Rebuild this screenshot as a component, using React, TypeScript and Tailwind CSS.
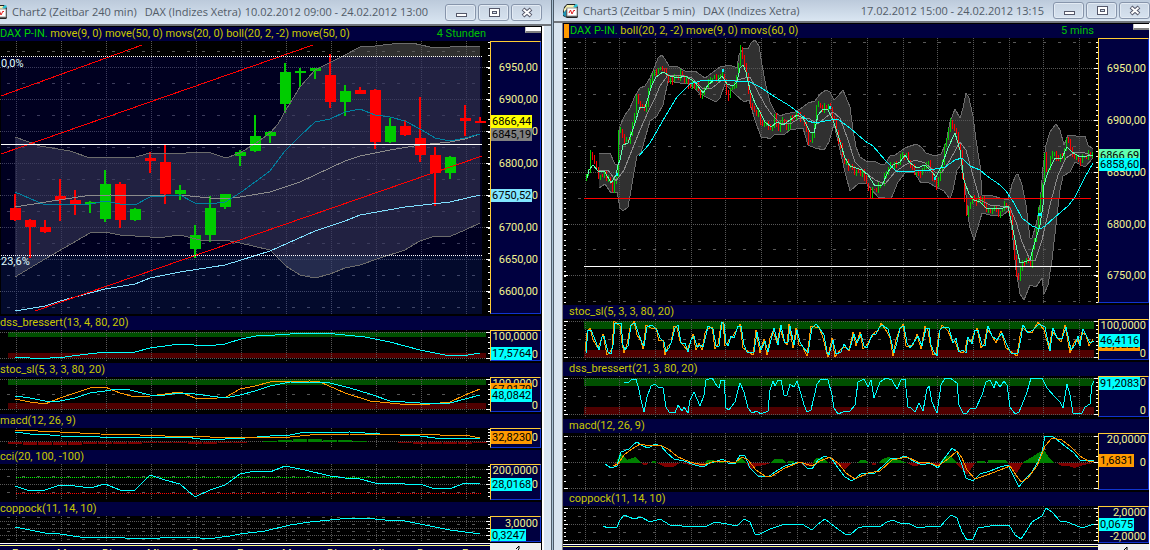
import type { ReactNode } from "react";

type Label = { y: number; text: string };
type Tag = { y: number; text: string; color: string };

const LEFT_COLS = [16, 61, 106, 151, 196, 241, 286, 331, 376, 421, 466];
const RIGHT_COLS = [585, 619, 655, 691, 725, 761, 797, 831, 867, 903, 937, 973, 1009, 1043, 1079];

// [center x, body top, body bottom, high, low, rising]
const CANDLES: [number, number, number, number, number, boolean][] = [
  [15, 208, 220, 194, 221, false],
  [30, 220, 227, 219, 258, false],
  [45, 227, 232, 220, 233, false],
  [60, 196, 200, 179, 221, false],
  [75, 200, 204, 190, 215, false],
  [90, 202, 204, 201, 213, true],
  [105, 184, 219, 170, 222, true],
  [120, 184, 220, 182, 228, false],
  [135, 209, 220, 208, 221, true],
  [150, 158, 161, 152, 173, false],
  [165, 162, 194, 145, 204, false],
  [180, 190, 194, 185, 200, true],
  [195, 235, 249, 225, 258, true],
  [210, 208, 235, 196, 242, true],
  [225, 194, 207, 194, 209, true],
  [240, 152, 156, 150, 166, true],
  [255, 136, 151, 115, 152, true],
  [270, 132, 136, 131, 143, true],
  [285, 72, 104, 63, 113, true],
  [300, 71, 73, 68, 87, true],
  [315, 68, 71, 68, 79, true],
  [330, 75, 102, 54, 108, false],
  [345, 91, 102, 85, 116, true],
  [360, 90, 94, 87, 94, false],
  [375, 90, 142, 89, 149, false],
  [390, 126, 142, 118, 143, true],
  [405, 126, 135, 120, 136, false],
  [420, 138, 155, 97, 162, false],
  [435, 155, 173, 147, 206, false],
  [450, 157, 173, 156, 179, true],
  [465, 118, 121, 105, 136, false],
  [480, 121, 123, 117, 123, false],
];

const UPPER_240 =
  "15,137 40,146 52,148 70,151 90,158 136,157 150,153 175,154 197,152 211,153 226,158 240,153 256,143 270,133 278,124 287,108 300,87 315,70 335,60 345,55 360,47 375,46 400,43 412,43 430,47 450,47 465,46 480,46";
const LOWER_240 =
  "480,223 465,230 451,236 435,236 420,241 405,250 380,258 360,265 345,268 330,274 315,278 300,275 286,266 270,250 240,243 225,240 210,241 200,240 180,235 165,237 150,237 120,235 105,232 90,233 45,259 15,277";

const UPPER_5 =
  "599,154 610,153 615,164 618,165 620,126 625,115 630,108 635,96 640,88 645,86 650,78 655,66 658,58 662,55 665,59 669,66 678,67 685,71 695,71 705,78 712,73 720,67 730,65 737,68 739,55 743,48 748,49 751,43 755,40 759,46 762,65 766,86 770,102 775,112 780,116 785,114 795,112 803,107 808,103 815,101 820,94 826,90 830,92 834,100 838,96 843,90 850,107 853,130 856,147 860,157 866,161 874,161 880,164 885,164 890,156 895,155 905,148 910,146 917,144 922,148 926,153 935,156 941,154 946,143 950,122 955,109 960,118 963,108 966,93 969,98 973,116 976,140 980,165 982,195 993,196 1000,198 1008,200 1010,193 1012,184 1016,175 1018,174 1022,185 1026,205 1030,238 1032,238 1036,225 1040,205 1043,167 1046,145 1050,132 1056,124 1060,130 1064,145 1068,135 1076,136 1085,136 1088,145 1093,149";
const LOWER_5 =
  "1093,158 1085,167 1075,162 1070,172 1063,176 1060,190 1056,225 1052,260 1048,285 1044,294 1042,278 1036,287 1030,285 1024,300 1020,294 1016,270 1012,230 1009,210 1003,215 990,215 982,213 980,220 974,240 970,228 968,215 965,185 961,165 957,170 953,190 950,199 944,191 938,188 927,182 921,183 914,172 905,173 898,182 891,199 878,197 872,190 866,183 858,184 850,191 845,172 840,150 834,124 829,142 824,150 815,148 808,145 803,128 790,130 785,134 775,134 770,139 765,137 761,137 755,120 751,107 749,100 744,102 735,94 725,84 720,98 716,102 712,100 700,94 690,84 680,83 668,81 663,105 657,116 650,121 646,135 641,153 637,156 634,172 631,190 628,207 623,211 620,208 617,192 611,193 605,184 599,188";
const PRICE_5 =
  "585,180 589,168 590,150 593,162 597,165 598,178 603,172 609,182 612,188 617,174 618,129 621,132 625,140 629,140 632,125 636,98 640,103 643,112 646,100 650,80 654,72 658,70 662,66 667,78 673,80 680,73 688,84 695,85 701,96 706,85 712,75 717,80 722,72 727,97 731,88 736,76 740,50 745,67 749,100 753,110 758,112 762,128 766,120 769,132 774,117 778,127 782,118 786,130 790,118 798,113 803,118 808,142 812,137 816,104 822,106 830,108 836,130 842,155 848,166 856,172 862,172 866,180 869,195 874,190 882,182 888,165 895,166 903,152 910,162 915,175 921,172 927,160 932,176 937,187 941,165 949,121 955,128 960,155 963,190 966,215 970,200 974,198 982,200 987,212 993,207 1000,212 1003,205 1009,208 1013,245 1017,285 1020,265 1024,262 1030,262 1034,240 1038,210 1042,180 1043,145 1045,165 1048,172 1051,150 1057,158 1062,155 1067,135 1070,150 1075,158 1080,160 1087,152 1093,157";
const FAST_5 =
  "587,178 589,170 593,165 598,171 605,172 611,183 616,175 618,165 620,160 623,145 628,143 634,126 640,107 645,107 648,98 652,85 656,77 663,72 670,76 678,78 685,76 695,82 703,93 708,85 714,80 718,80 722,76 727,84 733,86 737,82 740,68 743,65 746,72 750,90 755,103 760,112 765,122 771,127 777,122 783,125 790,120 797,115 803,118 810,132 814,133 818,115 823,109 828,110 833,120 838,135 845,158 850,166 856,168 862,170 868,175 875,186 882,185 888,172 893,165 900,162 905,155 910,163 917,168 925,165 932,172 936,177 942,165 948,148 955,133 960,150 964,180 969,194 974,200 980,202 987,209 993,208 1000,209 1008,206 1012,225 1016,245 1020,263 1024,262 1030,260 1034,245 1040,225 1043,205 1044,185 1048,172 1055,158 1062,158 1067,147 1072,152 1080,157 1087,156 1093,155";
const MID_5 =
  "599,171 608,170 616,181 624,170 632,150 640,130 648,112 655,98 660,86 668,75 680,75 692,78 703,89 712,88 722,80 733,81 745,78 750,77 757,90 765,105 772,115 780,123 790,124 800,118 808,118 818,124 825,118 833,112 840,118 848,140 855,162 865,172 875,180 885,184 895,172 905,165 915,160 925,163 935,172 942,172 950,160 960,142 966,150 972,172 980,200 990,205 1000,206 1010,208 1016,222 1022,242 1030,260 1035,261 1042,240 1050,205 1058,175 1066,158 1075,152 1085,153 1093,156";
const SLOW_5 =
  "639,156 650,143 662,122 677,97 690,84 700,81 715,80 735,81 750,82 760,87 775,97 790,106 800,114 808,121 815,123 825,121 838,119 850,128 865,141 873,146 885,160 897,172 915,171 930,170 945,167 955,160 962,158 970,166 980,170 987,176 1000,185 1006,191 1014,203 1022,218 1032,226 1040,229 1045,226 1055,217 1068,206 1075,197 1085,177 1093,163";
const STOC_5 =
  "586,353 588,330 591,330 594,337 599,350 602,337 604,336 608,352 611,354 613,345 615,323 621,323 623,345 625,350 628,346 631,325 635,323 638,332 642,343 644,346 647,327 652,325 657,330 660,338 664,342 666,352 669,348 672,340 675,328 678,325 681,343 685,343 688,352 691,340 694,336 697,347 700,345 703,347 706,335 708,326 713,329 716,346 719,346 722,322 724,324 726,343 728,346 731,336 734,338 738,326 741,326 744,345 747,352 754,352 757,332 761,350 765,341 768,352 771,340 774,328 778,345 781,325 785,343 788,342 790,326 794,345 797,330 800,342 803,347 808,353 812,328 816,324 820,329 824,335 827,352 829,355 833,340 836,354 841,352 844,344 848,350 850,348 854,334 857,343 861,334 864,346 867,348 872,335 876,334 879,328 882,325 888,329 891,340 894,353 897,342 900,328 904,326 907,343 910,348 914,342 918,336 922,346 926,328 929,328 931,345 934,352 937,356 940,330 943,327 949,328 953,343 956,338 959,352 963,350 966,353 968,337 972,344 975,330 978,330 982,345 985,346 988,326 992,336 997,340 1002,333 1007,345 1011,353 1018,353 1021,338 1023,325 1028,333 1033,330 1039,324 1045,327 1050,351 1053,328 1057,338 1062,339 1066,327 1071,350 1075,345 1078,336 1080,346 1083,329 1087,337 1090,343 1094,341";
const DSS_5 =
  "624,382 628,383 632,379 636,379 639,390 641,400 644,412 647,397 651,386 655,384 658,387 663,388 666,407 669,412 675,413 678,405 682,411 684,407 688,413 690,400 694,392 700,406 704,395 706,380 712,378 717,386 719,388 721,380 724,380 726,408 729,410 735,402 738,390 740,383 744,392 748,408 752,413 757,411 761,414 768,411 770,390 773,381 775,386 778,380 781,380 784,395 787,395 790,384 794,387 797,381 801,394 804,405 807,412 811,410 814,397 817,384 821,379 828,380 832,395 834,408 838,414 843,412 850,411 855,405 858,382 864,379 868,387 871,380 874,398 877,390 880,382 886,378 892,380 897,389 901,380 905,379 908,407 911,408 915,412 919,403 923,411 927,389 929,386 932,402 937,413 941,385 945,378 950,378 957,383 959,405 963,413 966,414 970,409 976,408 982,395 986,382 990,380 994,388 996,381 1000,387 1004,381 1007,385 1010,407 1015,414 1019,412 1024,400 1027,392 1031,378 1042,378 1047,388 1055,397 1060,402 1063,408 1067,384 1070,395 1073,413 1082,413 1085,407 1090,404 1092,385 1094,381";

function parse(points: string) {
  return points.split(" ").map((p) => p.split(",").map(Number));
}

// splits the price curve into short rising and falling bars
function priceBars(points: string) {
  const curve = parse(points);
  let up = "";
  let down = "";
  let seg = 0;
  let prev = curve[0][1];
  for (let x = 586, i = 0; x < 1093; x += 2, i++) {
    while (seg < curve.length - 2 && curve[seg + 1][0] < x) seg++;
    const [x0, y0] = curve[seg];
    const [x1, y1] = curve[seg + 1];
    const wobble = ((i * 37) % 11) - 5;
    const y = Math.round(y0 + ((y1 - y0) * (x - x0)) / (x1 - x0) + wobble * 0.6);
    const top = Math.min(prev, y) - (i % 3);
    const bottom = Math.max(prev, y) + ((i * 5) % 4);
    const bar = `M${x + 0.5} ${top}V${bottom + 1}`;
    if (y < prev || (y === prev && i % 2)) up += bar;
    else down += bar;
    prev = y;
  }
  return { up, down };
}

function signalLine(points: string) {
  return parse(points)
    .map(([x, y], i) => `${x - 1},${Math.min(357, Math.max(321, y + (i % 2 ? 3 : -2)))}`)
    .join(" ");
}

const BARS_5 = priceBars(PRICE_5);

function Line({ points, color }: { points: string; color: string }) {
  return <polyline points={points} fill="none" stroke={color} />;
}

type GridProps = {
  cols: number[];
  x1: number;
  x2: number;
  y1: number;
  y2: number;
  dotted?: number[];
  dashed?: number[];
  dashStart: number;
};

function Grid({ cols, x1, x2, y1, y2, dotted = [], dashed = [], dashStart }: GridProps) {
  return (
    <g stroke="#585858" fill="none">
      {cols.map((x) => (
        <path key={x} d={`M${x + 0.5} ${y1}V${y2}`} strokeDasharray="1 1" />
      ))}
      {dotted.map((y) => (
        <path key={y} d={`M${x1} ${y + 0.5}H${x2}`} strokeDasharray="1 1" />
      ))}
      {dashed.map((y) => (
        <path key={y} d={`M${dashStart} ${y + 0.5}H${x2}`} strokeDasharray="3 12" />
      ))}
    </g>
  );
}

function Ticks({ x, side, ys, major = [] }: { x: number; side: "left" | "right"; ys: number[]; major?: number[] }) {
  const dir = side === "right" ? -1 : 1;
  return (
    <g stroke="#ffffff">
      {ys.map((y) => (
        <path key={y} d={`M${x} ${y + 0.5}h${dir * 2}`} />
      ))}
      {major.map((y) => (
        <path key={`m${y}`} d={`M${x} ${y + 0.5}h${dir * 4}`} />
      ))}
    </g>
  );
}

function range(from: number, to: number, step: number) {
  const out: number[] = [];
  for (let y = from; y < to; y += step) out.push(Math.round(y));
  return out;
}

function Zones({ x1, x2, top, bottom, size }: { x1: number; x2: number; top: number; bottom: number; size: number }) {
  return (
    <>
      <rect x={x1} y={top} width={x2 - x1} height={size} fill="#005000" />
      <rect x={x1} y={bottom - size} width={x2 - x1} height={size} fill="#500000" />
    </>
  );
}

type PanelProps = {
  name: ReactNode;
  top: number;
  height: string;
  size: number;
  left: number;
  width: number;
  labels: Label[];
  tags: Tag[];
  notes?: Label[];
  children: ReactNode;
};

function Panel({ name, top, height, size, left, width, labels, tags, notes = [], children }: PanelProps) {
  return (
    <section className="mb-[2px]">
      <header className="flex h-[14px] items-center overflow-hidden whitespace-pre bg-[#000040] leading-[14px] text-[#c8c800]">
        {name}
      </header>
      <div className={`flex ${height}`}>
        <div className="relative h-full min-w-0 flex-1">
          <svg
            className="h-full w-full"
            viewBox={`${left} ${top} ${width} ${size}`}
            preserveAspectRatio="none"
            shapeRendering="crispEdges"
          >
            {children}
          </svg>
          {notes.map((n) => (
            <span
              key={n.text}
              className="absolute left-[1px] leading-[14px] text-[#e0ffff]"
              style={{ top: n.y - top - 7 }}
            >
              {n.text}
            </span>
          ))}
        </div>
        <div className="relative w-[51px] overflow-hidden border border-t-[#ffcc33] border-r-[#1034d0] border-b-[#1034d0] border-l-[#ffcc33] bg-[#000040]">
          {labels.map((l) => (
            <span
              key={l.text}
              className="absolute right-[2px] leading-[14px] text-[#f4f490]"
              style={{ top: l.y - top - 8 }}
            >
              {l.text}
            </span>
          ))}
          {tags.map((t) => (
            <span
              key={t.text}
              className="absolute left-0 h-[13px] px-[1px] leading-[13px] text-black"
              style={{ top: t.y - top - 1, backgroundColor: t.color }}
            >
              {t.text}
            </span>
          ))}
        </div>
      </div>
    </section>
  );
}

function WindowButton({ label, children }: { label: string; children: ReactNode }) {
  return (
    <button
      aria-label={label}
      className="flex h-[17px] w-[31px] items-center justify-center rounded-[3px] border border-[#8795ab] bg-linear-to-b from-[#c9d5e3] to-[#d6e2ef] shadow-[inset_0_0_0_1px_#e3ebf4]"
    >
      <svg width="12" height="11" viewBox="0 0 12 11" shapeRendering="crispEdges">
        {children}
      </svg>
    </button>
  );
}

function WindowButtons() {
  return (
    <div className="flex gap-[2px]">
      <WindowButton label="Minimieren">
        <rect x="1" y="6" width="11" height="4" rx="1" fill="#55586a" />
        <rect x="2" y="7" width="9" height="2" fill="#ffffff" />
      </WindowButton>
      <WindowButton label="Wiederherstellen">
        <rect x="1" y="1" width="11" height="9" fill="#55586a" />
        <rect x="2" y="2" width="9" height="7" fill="#ffffff" />
        <rect x="4" y="4" width="5" height="3" fill="#55586a" />
        <rect x="5" y="5" width="3" height="1" fill="#d6e2ef" />
      </WindowButton>
      <WindowButton label="Schließen">
        <path d="M2 2L10 9M10 2L2 9" stroke="#55586a" strokeWidth="4" shapeRendering="auto" />
        <path d="M2.500 2.500L9.500 8.500M9.500 2.500L2.500 8.500" stroke="#ffffff" strokeWidth="2" shapeRendering="auto" />
      </WindowButton>
    </div>
  );
}

function ChartIcon() {
  return (
    <svg width="16" height="16" viewBox="0 0 16 16" className="shrink-0">
      <path d="M1 4L4 1H12L15 4V14L14 15H4L0 13V9Z" fill="#222222" />
      <path d="M1 6L4 2H11L13 4L11 5H4L2 9H1Z" fill="#f6f0b0" />
      <path d="M10 4L13 1L15 2L13 5Z" fill="#28c4d8" />
      <path d="M0 10L3 7V14L0 12Z" fill="#1d8fb0" />
      <rect x="4" y="5" width="10" height="8" fill="#ffffff" stroke="#999999" />
      <path d="M6 10L7.500 7L9 11L11 7L12 8" stroke="#e02020" fill="none" />
    </svg>
  );
}

function TitleBar({ title, market, period, className }: { title: string; market: string; period: string; className: string }) {
  return (
    <div
      className={`flex items-center overflow-hidden whitespace-nowrap border-b-2 border-[#70757c] bg-linear-to-b from-[#bccadb] to-[#dae6f2] font-['Open_Sans',sans-serif] text-[11px] leading-[16px] text-[#525c68] ${className}`}
    >
      <ChartIcon />
      <h2 className="ml-[4px]">{title}</h2>
      <span className="ml-[8px]">{market}</span>
      <time className="ml-auto">{period}</time>
      <WindowButtons />
    </div>
  );
}

function MiniButton() {
  return (
    <button
      aria-label="Leiste"
      className="ml-auto h-[6px] w-[16px] self-start border-b-2 border-l border-b-[#808080] border-l-[#c0c0c0] bg-white"
    />
  );
}

function Chart240() {
  const base = { left: 0, width: 490 };
  const grid = { cols: LEFT_COLS, x1: 0, x2: 486, dashStart: 7 };
  return (
    <>
      <Panel
        {...base}
        name={
          <>
            <span className="text-[#00d000]">DAX P-IN.</span> move(9, 0) move(50, 0) movs(20, 0) boll(20, 2, -2) move(50, 0)
            <span className="ml-auto text-[#00c000]">4 Stunden</span>
            <span className="flex w-[55px] self-start">
              <MiniButton />
            </span>
          </>
        }
        top={41}
        height="h-[273px]"
        size={273}
        labels={[
          { y: 68, text: "6950,00" },
          { y: 100, text: "6900,00" },
          { y: 132, text: "6850,00" },
          { y: 164, text: "6800,00" },
          { y: 196, text: "6750,00" },
          { y: 228, text: "6700,00" },
          { y: 260, text: "6650,00" },
          { y: 292, text: "6600,00" },
        ]}
        tags={[
          { y: 115, text: "6866,44", color: "#ffff00" },
          { y: 128, text: "6845,19", color: "#808080" },
          { y: 189, text: "6750,52", color: "#80e6ff" },
        ]}
        notes={[
          { y: 64, text: "0,0%" },
          { y: 262, text: "23,6%" },
        ]}
      >
        <polygon points={`${UPPER_240} ${LOWER_240}`} fill="#303030" />
        <Grid {...grid} y1={41} y2={314} dotted={range(67, 314, 32)} dashed={range(51, 314, 32)} />
        <rect x={1} y={57} width={481} height={199} fill="#00006b" opacity={0.3} />
        <rect x={1} y={256} width={481} height={58} fill="#0a2193" opacity={0.3} />
        <g>
          {CANDLES.map(([x, top, bottom, high, low, up]) => (
            <g key={x} fill={up ? "#00cc00" : "#ff0000"}>
              <rect x={x - 1} y={high} width={2} height={low - high} />
              <rect x={x - 5} y={top} width={11} height={bottom - top} />
            </g>
          ))}
        </g>
        <Line points={UPPER_240} color="#6c6c6c" />
        <Line points={LOWER_240} color="#6c6c6c" />
        <Line
          color="#8c8c8c"
          points="15,207 40,203 65,199 85,196 110,195 150,196 180,195 210,198 225,199 240,197 270,192 300,182 315,175 330,168 345,161 360,156 390,150 420,145 450,142 465,139 480,134"
        />
        <Line
          color="#0080a0"
          points="15,192 45,205 90,204 105,201 120,204 135,205 150,197 180,195 195,203 210,204 225,202 240,193 270,171 285,151 300,136 315,122 330,119 345,112 360,109 375,115 390,117 405,121 422,130 435,138 450,141 465,138 480,134"
        />
        <Line
          color="#80e0ff"
          points="15,311 45,306 60,301 105,289 135,284 150,278 180,272 225,265 270,251 315,231 345,221 360,215 405,207 450,202 480,195"
        />
        <path d="M1 96L142 45M1 154L313 45M35 311L482 156" stroke="#ff0000" fill="none" />
        <path d="M1 144.500H482" stroke="#ffffff" />
        <path d="M1 56.500H482M1 255.500H482" stroke="#ffffff" strokeDasharray="1 1" />
        <Ticks x={490} side="right" ys={range(42, 314, 6.4)} major={range(67, 314, 32)} />
      </Panel>
      <Panel
        {...base}
        name="dss_bressert(13, 4, 80, 20)"
        top={330}
        height="h-[31px]"
        size={31}
        labels={[
          { y: 337, text: "100,0000" },
          { y: 355, text: "0" },
        ]}
        tags={[{ y: 347, text: "17,5764", color: "#00ffff" }]}
      >
        <Zones x1={8} x2={486} top={332} bottom={358} size={5} />
        <Grid {...grid} y1={330} y2={361} dotted={[332, 358]} />
        <Line
          color="#00ffff"
          points="15,357 30,358 50,358 65,357 80,355 105,352 135,352 150,348 180,344 208,346 225,344 241,339 256,336 275,335 290,334 315,333 325,333 345,335 365,337 390,342 420,350 445,355 460,355 468,355 480,353"
        />
        <Ticks x={490} side="right" ys={[337, 342, 348, 353]} major={[332, 358]} />
      </Panel>
      <Panel
        {...base}
        name="stoc_sl(5, 3, 3, 80, 20)"
        top={377}
        height="h-[35px]"
        size={35}
        labels={[
          { y: 384, text: "100,0000" },
          { y: 406, text: "0" },
        ]}
        tags={[
          { y: 383, text: "67,0179", color: "#ff9900" },
          { y: 389, text: "48,0842", color: "#00ffff" },
        ]}
      >
        <Zones x1={8} x2={486} top={379} bottom={409} size={6} />
        <Grid {...grid} y1={377} y2={412} dotted={[379, 409]} dashed={[394]} />
        <Line
          color="#ff9900"
          points="15,399 30,402 45,404 60,398 75,393 90,388 105,387 120,393 135,397 150,396 165,394 180,392 195,398 217,398 226,397 240,389 255,386 270,382 310,381 320,382 345,393 370,401 400,404 430,404 450,402 465,395 480,389"
        />
        <Line
          color="#00ffff"
          points="15,396 30,398 45,401 60,401 75,398 90,393 105,391 118,389 130,390 150,395 165,395 180,393 195,394 225,398 240,395 255,391 270,386 290,382 330,383 350,388 370,394 390,401 420,403 450,403 465,399 480,395"
        />
        <Ticks x={490} side="right" ys={[384, 389, 394, 399, 404]} major={[379, 409]} />
      </Panel>
      <Panel
        {...base}
        name="macd(12, 26, 9)"
        top={428}
        height="h-[20px]"
        size={20}
        labels={[{ y: 438, text: "0" }]}
        tags={[{ y: 431, text: "32,8230", color: "#ff9900" }]}
      >
        <Grid {...grid} y1={428} y2={448} dotted={[441]} />
        {[2, 3, 3, 3, 3, 2, 2, 2, 2, 1, 1, 1, 2, 2, 1, 1, 0, -1, -2, -3, -3, -2, -2, -1, 0, 0, 1, 2, 2, 2, 2, 1].map((h, i) => (
          <rect
            key={i}
            x={8 + i * 15}
            y={h > 0 ? 442 : 442 + h}
            width={14}
            height={Math.abs(h)}
            fill={h > 0 ? "#800000" : "#008000"}
          />
        ))}
        <Line
          color="#00ffff"
          points="15,432 30,434 50,435 60,436 100,437 120,437 185,437 200,439 225,439 245,438 270,436 290,435 300,433 350,432 380,434 400,435 420,436 435,438 480,438"
        />
        <Line
          color="#ff9900"
          points="15,430 60,432 100,434 140,435 165,436 200,436 210,437 290,437 310,435 350,434 410,434 440,435 470,436 480,438"
        />
        <Ticks x={490} side="right" ys={[429, 432, 435, 438, 444]} major={[441]} />
      </Panel>
      <Panel
        {...base}
        name="cci(20, 100, -100)"
        top={464}
        height="h-[36px]"
        size={36}
        labels={[
          { y: 471, text: "200,0000" },
          { y: 485, text: "0" },
        ]}
        tags={[{ y: 478, text: "28,0168", color: "#00ffff" }]}
      >
        <Grid {...grid} y1={464} y2={500} dotted={[469, 484]} dashed={[476, 492]} />
        <path d="M16 477.500H482" stroke="#00ff00" strokeDasharray="1 1" />
        <path d="M16 493.500H482" stroke="#ff0000" strokeDasharray="1 1" />
        <Line
          color="#00ffff"
          points="15,486 30,491 45,490 60,485 75,486 90,488 105,484 120,490 135,490 150,475 165,480 180,484 195,497 210,490 225,485 240,474 255,471 270,472 285,466 305,470 330,476 345,478 360,479 375,483 395,483 405,484 420,484 435,489 452,488 465,483 480,483"
        />
        <Ticks x={490} side="right" ys={[466, 473, 477, 480, 488, 492, 496]} major={[469, 484]} />
      </Panel>
      <Panel
        {...base}
        name="coppock(11, 14, 10)"
        top={516}
        height="h-[26px]"
        size={26}
        labels={[{ y: 524, text: "3,0000" }]}
        tags={[{ y: 529, text: "0,3247", color: "#00ffff" }]}
      >
        <Grid {...grid} y1={516} y2={542} dotted={[521, 528, 535]} dashed={[517, 524, 531, 539]} />
        <Line
          color="#00ffff"
          points="15,527 30,530 45,533 60,534 80,537 115,537 135,539 160,538 180,537 200,538 215,538 230,536 240,534 265,531 290,525 310,522 340,519 365,518 385,520 405,521 420,524 450,530 480,534"
        />
        <Ticks x={490} side="right" ys={[517, 524, 531, 539]} major={[521, 528, 535]} />
      </Panel>
    </>
  );
}

function Chart5() {
  const base = { left: 563, width: 535 };
  const grid = { cols: RIGHT_COLS, x1: 569, x2: 1094, dashStart: 578 };
  return (
    <>
      <Panel
        {...base}
        name={
          <>
            <span className="ml-[1px] mr-[1px] h-full w-[5px] bg-[#ff9900]" />
            <span className="text-[#00d000]">DAX P-IN.</span> boll(20, 2, -2) move(9, 0) movs(60, 0)
            <span className="ml-auto text-[#00c000]">5 mins</span>
            <span className="flex w-[55px] self-start">
              <MiniButton />
            </span>
          </>
        }
        top={38}
        height="h-[265px]"
        size={265}
        labels={[
          { y: 69, text: "6950,00" },
          { y: 121, text: "6900,00" },
          { y: 173, text: "6850,00" },
          { y: 225, text: "6800,00" },
          { y: 276, text: "6750,00" },
        ]}
        tags={[
          { y: 149, text: "6866,69", color: "#60ffb0" },
          { y: 158, text: "6858,60", color: "#00ffff" },
        ]}
      >
        <polygon points={`${UPPER_5} ${LOWER_5}`} fill="#303030" />
        <Grid {...grid} y1={38} y2={303} dotted={[68, 120, 172, 224, 275]} dashed={[42, 94, 146, 198, 249, 301]} />
        <Line points={UPPER_5} color="#6c6c6c" />
        <Line points={LOWER_5} color="#6c6c6c" />
        <path d={BARS_5.down} stroke="#ff0000" />
        <path d={BARS_5.up} stroke="#00cc00" />
        <Line points={MID_5} color="#8c8c8c" />
        <Line points={FAST_5} color="#60ffb0" />
        <Line points={SLOW_5} color="#00ffff" />
        <path d="M616 173h2v3h-2zM722 69h2v3h-2zM829 106h2v3h-2zM934 177h2v3h-2zM1038 213h4v3h-4z" fill="#00ffff" />
        <path d="M584 198.500H1091" stroke="#ff0000" />
        <path d="M584 266.500H1091" stroke="#ffffff" />
        <Ticks x={564} side="left" ys={range(42, 303, 5.2)} major={[68, 120, 172, 224, 275]} />
        <Ticks x={1098} side="right" ys={range(42, 303, 5.2)} major={[68, 120, 172, 224, 275]} />
      </Panel>
      <Panel
        {...base}
        name={<span className="ml-[6px]">stoc_sl(5, 3, 3, 80, 20)</span>}
        top={319}
        height="h-[41px]"
        size={41}
        labels={[
          { y: 326, text: "100,0000" },
          { y: 354, text: "0" },
        ]}
        tags={[
          { y: 338, text: "53,6226", color: "#ff9900" },
          { y: 334, text: "46,4116", color: "#00ffff" },
        ]}
      >
        <Zones x1={584} x2={1094} top={321} bottom={358} size={8} />
        <Grid {...grid} y1={319} y2={360} dotted={[321, 357]} dashed={[339]} />
        <Line points={signalLine(STOC_5)} color="#ff9900" />
        <Line points={STOC_5} color="#00ffff" />
        <Ticks x={564} side="left" ys={range(325, 357, 4)} major={[321, 357]} />
        <Ticks x={1098} side="right" ys={range(325, 357, 4)} major={[321, 357]} />
      </Panel>
      <Panel
        {...base}
        name={<span className="ml-[6px]">dss_bressert(21, 3, 80, 20)</span>}
        top={376}
        height="h-[41px]"
        size={41}
        labels={[
          { y: 383, text: "100,0000" },
          { y: 411, text: "0" },
        ]}
        tags={[{ y: 377, text: "91,2083", color: "#00ffff" }]}
      >
        <Zones x1={584} x2={1094} top={378} bottom={415} size={8} />
        <Grid {...grid} y1={376} y2={417} dotted={[378, 414]} dashed={[396]} />
        <Line points={DSS_5} color="#00ffff" />
        <Ticks x={564} side="left" ys={range(382, 414, 4)} major={[378, 414]} />
        <Ticks x={1098} side="right" ys={range(382, 414, 4)} major={[378, 414]} />
      </Panel>
      <Panel
        {...base}
        name={<span className="ml-[6px]">macd(12, 26, 9)</span>}
        top={433}
        height="h-[57px]"
        size={57}
        labels={[
          { y: 440, text: "20,0000" },
          { y: 463, text: "0" },
        ]}
        tags={[{ y: 454, text: "1,6831", color: "#ff9900" }]}
      >
        <Grid {...grid} y1={433} y2={490} dotted={[436, 462, 488]} dashed={[449, 475]} />
        <path
          fill="#008000"
          d="M616 463L620 453L623 455L627 460L635 457L641 463ZM652 461h4v2h-4zM704 463L708 460H714L716 463ZM720 461h4v2h-4zM736 463L740 457L746 463ZM771 463L774 459H782L786 463ZM788 461h6v2h-6zM813 463L816 458H824L828 463ZM857 463L860 460H866L868 463ZM878 463L882 459L888 457L900 460L907 463ZM940 463L944 457L950 455L957 463ZM977 461h8v2h-8zM988 463V460H1006L1008 463ZM1022 463L1032 457L1038 453L1044 450L1048 456L1054 463Z"
        />
        <path
          fill="#800000"
          d="M613 463h4v4zM641 463H649L646 465H643ZM657 463H680L673 467H665ZM680 463H712L705 466L690 465ZM746 463L751 470L757 466L765 465L770 463ZM800 463H813L810 466H804ZM829 463L838 465L845 469L852 463ZM872 463h4v2h-4zM907 463L913 466L922 465L930 463ZM932 463L938 466L941 463ZM956 463L962 470L967 475L975 463ZM1008 463L1012 469L1017 473L1023 463ZM1057 463L1062 466H1068L1075 468L1083 465L1094 463Z"
        />
        <Line
          color="#00ffff"
          points="605,464 611,468 617,466 621,452 629,449 634,444 637,442 643,446 648,448 655,444 661,446 667,453 674,459 684,461 695,465 703,467 710,463 717,461 723,459 728,463 735,464 740,455 745,456 750,468 758,476 768,477 775,472 785,466 795,463 801,462 807,468 812,469 818,460 825,456 832,459 838,468 845,477 852,481 862,473 875,473 884,465 890,459 900,458 905,456 913,461 922,465 930,463 938,468 943,460 947,455 952,448 957,452 962,465 966,478 973,481 980,474 990,471 1000,467 1008,465 1013,475 1019,487 1024,480 1032,472 1038,462 1042,452 1045,436 1053,437 1060,442 1066,447 1073,452 1080,460 1087,460 1094,460"
        />
        <Line
          color="#ff9900"
          points="613,466 618,464 624,455 632,449 640,444 650,446 660,445 668,449 678,457 690,462 703,465 715,461 725,461 735,463 742,457 748,460 756,470 765,476 772,476 785,468 800,462 812,466 820,461 830,457 838,463 846,473 855,479 868,473 880,471 892,460 907,457 918,462 930,463 938,466 948,459 957,451 962,458 967,470 975,479 987,475 1000,470 1010,466 1016,475 1021,482 1028,478 1037,466 1045,446 1052,438 1062,440 1070,446 1080,456 1088,461 1094,461"
        />
        <Ticks x={564} side="left" ys={[443, 449, 456, 469, 475, 481]} major={[436, 462, 488]} />
        <Ticks x={1098} side="right" ys={[443, 449, 456, 469, 475, 481]} major={[436, 462, 488]} />
      </Panel>
      <Panel
        {...base}
        name={<span className="ml-[6px]">coppock(11, 14, 10)</span>}
        top={506}
        height="h-[37px]"
        size={37}
        labels={[
          { y: 513, text: "2,0000" },
          { y: 537, text: "-2,0000" },
        ]}
        tags={[{ y: 518, text: "0,0675", color: "#00ffff" }]}
      >
        <Grid {...grid} y1={506} y2={543} dotted={[508, 524, 540]} dashed={[516, 532]} />
        <Line
          color="#00ffff"
          points="603,526 608,528 617,527 620,520 624,515 629,517 634,519 641,517 650,522 660,519 670,525 682,526 705,527 715,522 727,524 737,526 744,519 750,522 755,534 760,534 770,529 785,524 802,524 812,530 818,524 825,519 835,527 845,534 850,535 858,528 866,526 880,527 885,523 892,520 900,523 910,524 918,528 932,526 940,527 945,521 951,515 957,518 962,532 967,540 973,539 978,528 990,526 1009,525 1015,535 1021,539 1027,530 1032,522 1042,516 1046,508 1052,512 1060,521 1067,522 1075,525 1082,528 1088,526 1094,524"
        />
        <Ticks x={564} side="left" ys={[512, 516, 520, 528, 532, 536]} major={[508, 524, 540]} />
        <Ticks x={1098} side="right" ys={[512, 516, 520, 528, 532, 536]} major={[508, 524, 540]} />
      </Panel>
    </>
  );
}

function TimeAxis({ days }: { days: string[] }) {
  return (
    <footer className="-mt-[1px] flex">
      <div className="min-w-0 flex-1 border-t border-white bg-[#000040]">
        <div className="mt-[1px] flex h-[16px] gap-[30px] overflow-hidden border-t border-[#ffff80] pt-[1px] pl-[12px] leading-[14px] text-[#ffff80]">
          {days.map((d, i) => (
            <span key={i} className="w-[15px] shrink-0">
              {d}
            </span>
          ))}
        </div>
      </div>
      <div className="w-[51px] bg-[#f0f0f0]">
        <svg width="51" height="10" viewBox="0 0 51 10">
          <path d="M26 6L29 3V6L27 8" fill="none" stroke="#000000" />
        </svg>
      </div>
    </footer>
  );
}

export default function App() {
  return (
    <main className="flex h-screen overflow-hidden bg-[#d8e4f0] font-['Roboto','Liberation_Sans',sans-serif] text-[11px]">
      <section className="flex min-w-0 flex-[554]">
        <div className="min-w-0 flex-1">
          <TitleBar
            title="Chart2 (Zeitbar 240 min)"
            market="DAX (Indizes Xetra)"
            period="10.02.2012 09:00 - 24.02.2012 13:00"
            className="h-[26px] pr-[9px] [&>svg]:-ml-[8px] [&>time]:mr-[17px]"
          />
          <div className="mr-[7px] border-r-2 border-white bg-black pt-[1px] pr-[1px]">
            <Chart240 />
            <TimeAxis days={["Fr", "Mo", "Di", "Mi", "Do", "Fr", "Mo", "Di", "Mi", "Do", "Fr"]} />
          </div>
        </div>
        <div className="w-[3px] border-x border-[#4c5a68] bg-[#a8c0d4]" />
      </section>
      <section className="min-w-0 flex-[596]">
        <TitleBar
          title="Chart3 (Zeitbar 5 min)"
          market="DAX (Indizes Xetra)"
          period="17.02.2012 15:00 - 24.02.2012 13:15"
          className="h-[23px] pl-[9px] [&>time]:mr-[9px]"
        />
        <div className="ml-[8px] border-r border-l border-r-white border-l-[#808080] bg-black pt-[1px]">
          <Chart5 />
          <TimeAxis days={[]} />
        </div>
      </section>
    </main>
  );
}
